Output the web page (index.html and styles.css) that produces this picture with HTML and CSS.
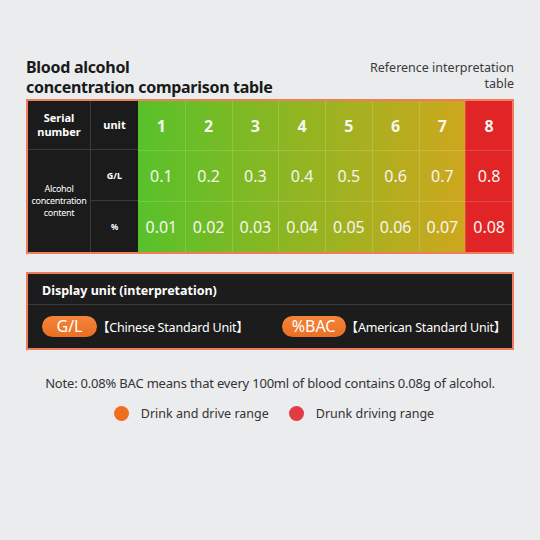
FILE: index.html
```html
<!DOCTYPE html>
<html lang="en">

<head>
    <meta charset="UTF-8">
    <meta name="viewport" content="width=device-width, initial-scale=1.0">
    <title>Blood alcohol concentration comparison table</title>
    <link rel="stylesheet" href="styles.css">
</head>

<body>
    <div class="page">
        <div class="heading">
            <h1>Blood alcohol<br>concentration comparison table</h1>
            <p>Reference interpretation<br>table</p>
        </div>

        <div class="bac-table">
            <div class="labels">
                <div class="cell head">Serial<br>number</div>
                <div class="cell head">unit</div>
                <div class="cell row-name">Alcohol<br>concentration<br>content</div>
                <div class="cell unit">G/L</div>
                <div class="cell unit small">%</div>
            </div>
            <div class="levels">
                <div class="lv num">1</div>
                <div class="lv num">2</div>
                <div class="lv num">3</div>
                <div class="lv num">4</div>
                <div class="lv num">5</div>
                <div class="lv num">6</div>
                <div class="lv num">7</div>
                <div class="lv num">8</div>

                <div class="lv">0.1</div>
                <div class="lv">0.2</div>
                <div class="lv">0.3</div>
                <div class="lv">0.4</div>
                <div class="lv">0.5</div>
                <div class="lv">0.6</div>
                <div class="lv">0.7</div>
                <div class="lv">0.8</div>

                <div class="lv">0.01</div>
                <div class="lv">0.02</div>
                <div class="lv">0.03</div>
                <div class="lv">0.04</div>
                <div class="lv">0.05</div>
                <div class="lv">0.06</div>
                <div class="lv">0.07</div>
                <div class="lv">0.08</div>
            </div>
        </div>

        <div class="units-box">
            <div class="units-title">Display unit (interpretation)</div>
            <div class="units-row">
                <div class="unit-item">
                    <span class="pill">G/L</span>
                    <span class="unit-text">【Chinese Standard Unit】</span>
                </div>
                <div class="unit-item">
                    <span class="pill wide">%BAC</span>
                    <span class="unit-text">【American Standard Unit】</span>
                </div>
            </div>
        </div>

        <p class="note">Note: 0.08% BAC means that every 100ml of blood contains 0.08g of alcohol.</p>

        <div class="legend">
            <div class="legend-item"><span class="dot orange"></span>Drink and drive range</div>
            <div class="legend-item"><span class="dot red"></span>Drunk driving range</div>
        </div>
    </div>
</body>

</html>
```

FILE: styles.css
```css
* {
    margin: 0;
    padding: 0;
    box-sizing: border-box;
}

body {
    font-family: 'Noto Sans', 'Noto Sans CJK SC', sans-serif;
    background: #ebecee;
    color: #333;
    width: 540px;
    height: 540px;
    overflow: hidden;
}

.page {
    padding: 57px 26px 0 26px;
}

.heading {
    display: flex;
    justify-content: space-between;
    align-items: flex-start;
    height: 42px;
}

.heading h1 {
    font-size: 16px;
    line-height: 20px;
    font-weight: 700;
    color: #1a1a1a;
    letter-spacing: -0.3px;
}

.heading p {
    font-size: 12.5px;
    line-height: 16px;
    text-align: right;
    color: #3a3a3a;
    padding-top: 3px;
}

/* main table */
.bac-table {
    display: flex;
    border: 2px solid #ef7d5c;
    height: 155px;
}

.labels {
    display: grid;
    grid-template-columns: 63px 47px;
    grid-template-rows: 49px 51px 51px;
    background: #1b1b1b;
}

.cell {
    display: flex;
    align-items: center;
    justify-content: center;
    text-align: center;
    color: #fff;
    border-right: 1px solid #3a3a3a;
    border-bottom: 1px solid #3a3a3a;
}

.cell.head {
    font-size: 11px;
    line-height: 14px;
    font-weight: 700;
}

.row-name {
    grid-row: span 2;
    font-size: 9px;
    line-height: 12px;
    letter-spacing: -0.3px;
    border-bottom: none;
}

.cell.unit {
    font-size: 9px;
    font-weight: 700;
}

.cell.unit.small {
    font-size: 8px;
    border-bottom: none;
}

.labels .cell:nth-child(2),
.labels .cell:nth-child(4),
.labels .cell:nth-child(5) {
    border-right: none;
}

.levels {
    flex: 1;
    display: grid;
    grid-template-columns: repeat(8, 1fr);
    grid-template-rows: 49px 51px 51px;
    background: linear-gradient(90deg, #58c12a 0%, #8db622 40%, #cea71d 87.5%, #e12426 87.5%, #e12426 100%);
}

.lv {
    display: flex;
    align-items: center;
    justify-content: center;
    color: #f6f6ee;
    font-size: 16px;
    border-left: 1px solid rgba(255, 255, 255, 0.16);
    border-top: 1px solid rgba(255, 255, 255, 0.16);
}

.lv.num {
    font-weight: 700;
    border-top: none;
}

.lv:nth-child(8n+1) {
    border-left: none;
}

/* units box */
.units-box {
    margin-top: 18px;
    border: 2px solid #ef7d5c;
    background: #1c1c1c;
    height: 78px;
}

.units-title {
    color: #fff;
    font-size: 12.5px;
    font-weight: 700;
    padding: 4px 14px 0 14px;
    height: 31px;
    line-height: 26px;
    border-bottom: 1px solid #3a3a3a;
}

.units-row {
    display: flex;
    align-items: center;
    padding: 11px 0 0 14px;
    gap: 33px;
    white-space: nowrap;
}

.unit-item {
    display: flex;
    align-items: center;
    flex-shrink: 0;
}

.pill {
    display: inline-block;
    flex-shrink: 0;
    width: 55px;
    height: 21px;
    line-height: 21px;
    border-radius: 11px;
    background: linear-gradient(180deg, #f5843a, #ea6f23);
    color: #fff;
    text-align: center;
    font-size: 16px;
}

.pill.wide {
    width: 64px;
}

.unit-text {
    color: #fff;
    font-size: 12.5px;
    letter-spacing: -0.2px;
}

/* footer */
.note {
    margin-top: 24px;
    text-align: center;
    font-size: 13px;
    letter-spacing: -0.2px;
    color: #333;
}

.legend {
    display: flex;
    justify-content: center;
    gap: 20px;
    margin-top: 13px;
    padding-left: 8px;
    font-size: 12.5px;
    color: #333;
}

.legend-item {
    display: flex;
    align-items: center;
    gap: 12px;
}

.dot {
    width: 15px;
    height: 15px;
    border-radius: 50%;
}

.dot.orange {
    background: #ef6f1e;
}

.dot.red {
    background: #e33b44;
}
```
